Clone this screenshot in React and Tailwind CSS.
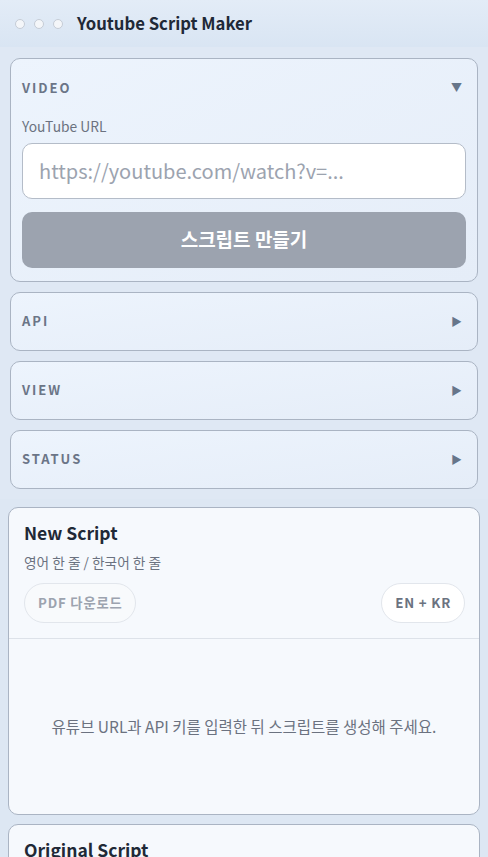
import React, { useState } from "react";

const font = { fontFamily: '"Noto Sans CJK KR", "Noto Sans", sans-serif' };

function Section({ title, open, children }) {
    return (
        <div className="rounded-[10px] border border-[#aab4c3] bg-gradient-to-br from-[#edf4fd] to-[#e5edf8] px-[11px]">
            <div className="flex h-[57px] items-center justify-between">
                <span className="text-[13px] font-bold tracking-[0.15em] text-[#6b7587]">{title}</span>
                <span className="mr-[4px] text-[11px] text-[#66758a]">{open ? "▼" : "▶"}</span>
            </div>
            {children}
        </div>
    );
}

export default function App() {
    const [url, setUrl] = useState("");

    return (
        <div className="min-h-screen bg-[#dde7f3]" style={font}>
            {/* title bar */}
            <div className="flex h-[47px] items-center bg-gradient-to-b from-[#e3ecf7] to-[#d9e5f3] px-[15px]">
                <div className="flex gap-[9px]">
                    <span className="h-[10px] w-[10px] rounded-full border border-[#c5ccd6] bg-[#f4f6f9]" />
                    <span className="h-[10px] w-[10px] rounded-full border border-[#c5ccd6] bg-[#f4f6f9]" />
                    <span className="h-[10px] w-[10px] rounded-full border border-[#c5ccd6] bg-[#f4f6f9]" />
                </div>
                <h1 className="ml-[14px] text-[16.7px] font-bold text-[#1f2937]">Youtube Script Maker</h1>
            </div>

            {/* sidebar */}
            <div className="flex flex-col gap-[10px] bg-[#dfe8f4] px-[10px] pb-[10px] pt-[11px]">
                <Section title="VIDEO" open>
                    <div className="pb-[13px]">
                        <label className="block text-[13.8px] text-[#6b7280]">YouTube URL</label>
                        <input
                            type="text"
                            value={url}
                            onChange={(e) => setUrl(e.target.value)}
                            placeholder="https://youtube.com/watch?v=..."
                            className="mt-[6px] h-[56px] w-full rounded-[10px] border border-[#b4bcc8] bg-white px-[16px] text-[20px] text-[#374151] outline-none placeholder:text-[#9ca3af]"
                        />
                        <button className="mt-[13px] h-[56px] w-full rounded-[10px] bg-[#9ca3af] text-[19px] font-bold text-white">
                            스크립트 만들기
                        </button>
                    </div>
                </Section>
                <Section title="API" />
                <Section title="VIEW" />
                <Section title="STATUS" />
            </div>

            {/* main */}
            <div className="flex flex-col gap-[9px] px-[8px] pt-[8px]">
                <div className="rounded-[10px] border border-[#aab4c3] bg-[#f6f9fd]">
                    <div className="pl-[15px] pr-[14px] pt-[13px] pb-[15px]">
                        <h2 className="text-[17.5px] font-bold leading-[24px] text-[#1f2937]">New Script</h2>
                        <p className="mt-[7px] text-[13.7px] text-[#6b7280]">영어 한 줄 / 한국어 한 줄</p>
                        <div className="mt-[11px] flex items-center justify-between">
                            <button className="h-[40px] rounded-full border border-[#e2e6ec] bg-[#f8fafc] px-[13px] text-[13.3px] font-bold tracking-[0.06em] text-[#9ca3af]">
                                PDF 다운로드
                            </button>
                            <button className="h-[40px] rounded-full border border-[#e2e6ec] bg-white px-[13px] text-[13.3px] font-bold tracking-[0.06em] text-[#6b7280]">
                                EN + KR
                            </button>
                        </div>
                    </div>
                    <div className="flex h-[176px] items-center justify-center border-t border-[#dde2e9] text-[15.5px] text-[#6b7280]">
                        유튜브 URL과 API 키를 입력한 뒤 스크립트를 생성해 주세요.
                    </div>
                </div>
                <div className="rounded-[10px] border border-[#aab4c3] bg-[#f6f9fd] px-[15px] pt-[13px] pb-[40px]">
                    <h2 className="text-[17.5px] font-bold leading-[24px] text-[#1f2937]">Original Script</h2>
                </div>
            </div>
        </div>
    );
}
